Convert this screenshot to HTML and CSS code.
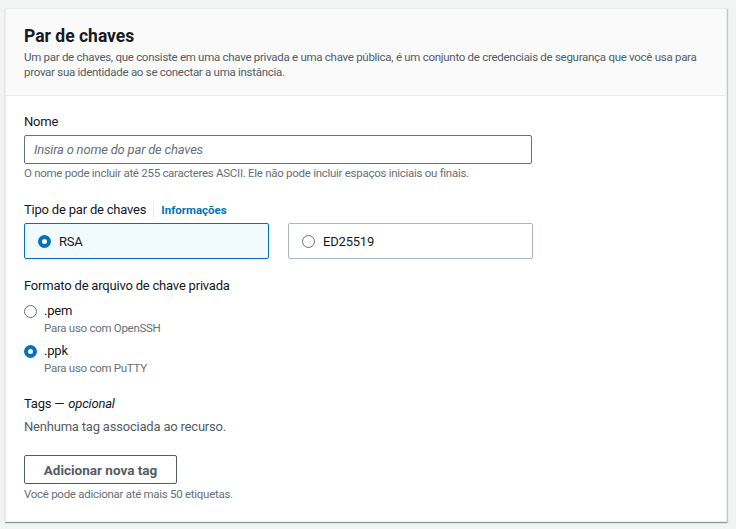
FILE: index.html
```html
<!DOCTYPE html>
<html lang="pt">
<head>
<meta charset="utf-8">
<link rel="stylesheet" href="styles.css">
</head>
<body>
<div class="card">
  <div class="card-header">
    <h2 class="title">Par de chaves</h2>
    <p class="desc">Um par de chaves, que consiste em uma chave privada e uma chave pública, é um conjunto de credenciais de segurança que você usa para provar sua identidade ao se conectar a uma instância.</p>
  </div>
  <div class="card-body">
    <div class="field nome">
      <div class="label">Nome</div>
      <div class="input"><span class="placeholder">Insira o nome do par de chaves</span></div>
      <div class="hint">O nome pode incluir até 255 caracteres ASCII. Ele não pode incluir espaços iniciais ou finais.</div>
    </div>
    <div class="field tipo">
      <div class="label">Tipo de par de chaves<span class="sep"></span><span class="info">Informações</span></div>
      <div class="tiles">
        <div class="tile selected"><span class="radio on"></span><span>RSA</span></div>
        <div class="tile"><span class="radio"></span><span>ED25519</span></div>
      </div>
    </div>
    <div class="field">
      <div class="label">Formato de arquivo de chave privada</div>
      <div class="opt">
        <span class="radio"></span>
        <div><div class="opt-name">.pem</div><div class="opt-desc">Para uso com OpenSSH</div></div>
      </div>
      <div class="opt">
        <span class="radio on"></span>
        <div><div class="opt-name">.ppk</div><div class="opt-desc">Para uso com PuTTY</div></div>
      </div>
    </div>
    <div class="field tags">
      <div class="label">Tags — <i>opcional</i></div>
      <div class="empty">Nenhuma tag associada ao recurso.</div>
      <div class="btn">Adicionar nova tag</div>
      <div class="hint">Você pode adicionar até mais 50 etiquetas.</div>
    </div>
  </div>
</div>
</body>
</html>
```
FILE: styles.css
```css
* { box-sizing: border-box; }
html, body { margin: 0; padding: 0; }
body {
  background: #f2f3f3;
  font-family: Roboto, "Noto Sans", sans-serif;
  color: #16191f;
  padding: 8px 9px 0 5px;
  height: 529px;
  overflow: hidden;
}
.card {
  background: #fff;
  border: 1px solid #eaeded;
  box-shadow: 0 1px 1px 0 rgba(0,28,36,0.3), 1px 1px 1px 0 rgba(0,28,36,0.15);
  width: 722px;
}
.card-header {
  background: #fafafa;
  border-bottom: 1px solid #eaeded;
  padding: 16px 18px 15px 18px;
}
.title {
  margin: 0;
  font-size: 17.5px;
  font-weight: 700;
  line-height: 22px;
}
.desc {
  margin: 3px 0 0;
  font-size: 11.5px;
  line-height: 15px;
  color: #545b64;
  letter-spacing: -0.28px;
}
.card-body {
  padding: 17px 18px 19px 18px;
}
.field { margin-bottom: 17px; }
.field.nome { margin-bottom: 20px; }
.field.tipo { margin-bottom: 18px; }
.field.tags { padding-top: 2px; margin-bottom: 0; }
.label {
  font-size: 13px;
  letter-spacing: -0.2px;
  line-height: 18px;
  display: flex;
  align-items: center;
}
.label i { margin-left: 4px; }
.sep {
  display: inline-block;
  width: 1px;
  height: 18px;
  background: #eaeded;
  margin: 0 7px 0 7px;
}
.info {
  color: #0073bb;
  font-weight: 700;
  font-size: 11.5px;
  letter-spacing: 0;
}
.input {
  margin-top: 4px;
  width: 508px;
  height: 29px;
  border: 1px solid #687078;
  border-radius: 2px;
  padding: 0 9px;
  display: flex;
  align-items: center;
}
.placeholder {
  font-style: italic;
  color: #687078;
  font-size: 13px;
  letter-spacing: -0.2px;
}
.hint {
  margin-top: 1px;
  font-size: 11.5px;
  line-height: 16px;
  color: #687078;
  letter-spacing: -0.28px;
}
.tiles {
  display: flex;
  gap: 19px;
  margin-top: 4px;
}
.tile {
  width: 245px;
  height: 36px;
  border: 1px solid #aab7b8;
  border-radius: 2px;
  display: flex;
  align-items: center;
  padding-left: 13px;
  font-size: 13px;
  letter-spacing: -0.2px;
  gap: 8px;
}
.tile.selected {
  background: #f1faff;
  border-color: #0073bb;
}
.radio {
  flex: none;
  width: 13px;
  height: 13px;
  border-radius: 50%;
  border: 1.5px solid #687078;
  background: #fff;
}
.radio.on {
  border: 4px solid #0073bb;
}
.opt {
  display: flex;
  gap: 7px;
  margin-top: 7px;
  align-items: flex-start;
}
.opt .radio { margin-top: 3px; }
.opt + .opt { margin-top: 6px; }
.opt-name { font-size: 13px; letter-spacing: -0.2px; line-height: 18px; }
.opt-desc { font-size: 11.5px; letter-spacing: -0.28px; line-height: 16px; color: #687078; }
.empty {
  margin-top: 5px;
  font-size: 13px;
  letter-spacing: -0.2px;
  line-height: 18px;
  color: #545b64;
}
.btn {
  margin-top: 19px;
  width: 153px;
  height: 29px;
  border: 1px solid #545b64;
  border-radius: 2px;
  display: flex;
  align-items: center;
  justify-content: center;
  font-weight: 700;
  font-size: 13.5px;
  letter-spacing: 0;
  color: #545b64;
}
.btn + .hint { margin-top: 2px; }
```
